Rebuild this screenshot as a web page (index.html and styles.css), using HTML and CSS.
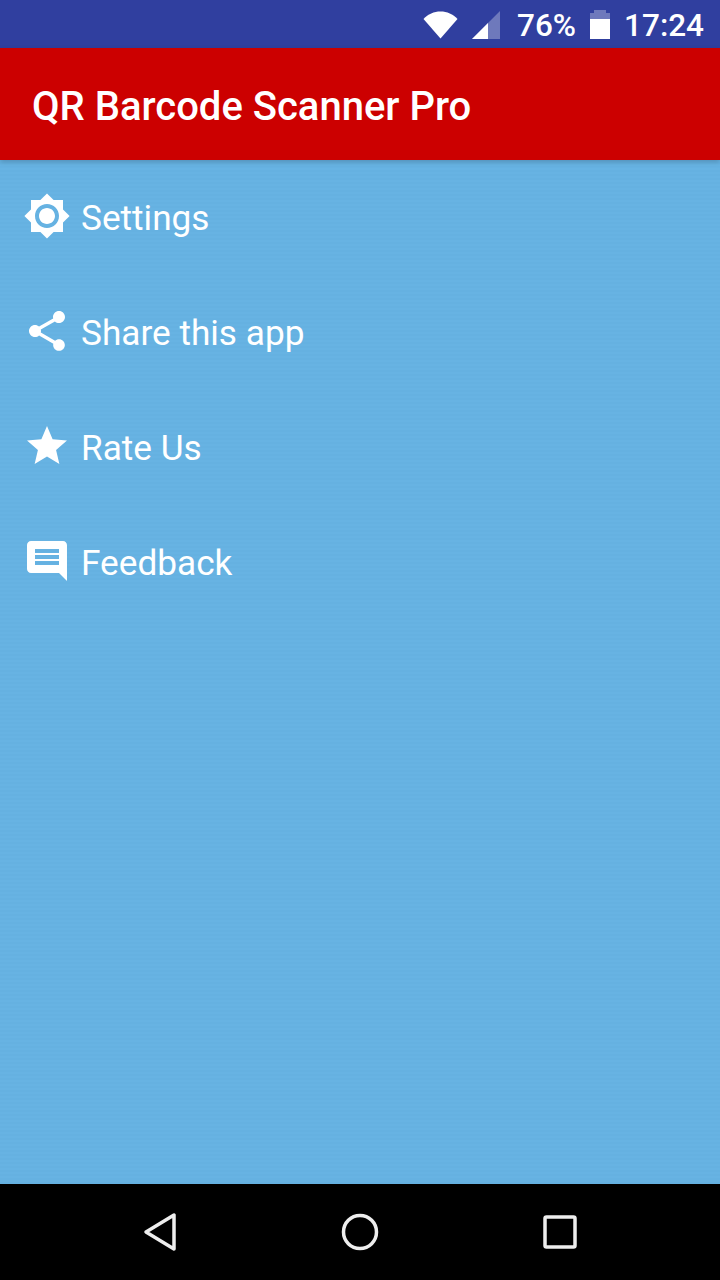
FILE: index.html
```html
<!DOCTYPE html>
<html lang="en">
<head>
    <meta charset="UTF-8">
    <title>QR Barcode Scanner Pro</title>
    <link rel="stylesheet" href="styles.css">
</head>
<body>
    <!-- status bar -->
    <div class="status-bar">
        <svg class="wifi-icon" width="36" height="28" viewBox="0 0 36 28"><path d="M17.500 27.500L.5 8C5 3 11 .5 17.500 .5s12.500 2.500 17 7.500z" fill="#fff"/></svg>
        <svg class="signal-icon" width="28" height="28" viewBox="0 0 28 28">
            <path d="M28 0v28H0z" fill="#fff" fill-opacity="0.3"/>
            <path d="M16 12v16H0z" fill="#fff"/>
        </svg>
        <span class="status-text percent">76%</span>
        <svg class="battery-icon" width="20" height="29" viewBox="0 0 20 29">
            <path d="M4 0h12v3h4v6H0V3h4z" fill="#fff" fill-opacity="0.3"/>
            <path d="M0 9h20v20H0z" fill="#fff"/>
        </svg>
        <span class="status-text time">17:24</span>
    </div>

    <!-- app bar -->
    <header class="app-bar">QR Barcode Scanner Pro</header>

    <!-- menu -->
    <main class="menu">
        <div class="menu-item">
            <svg class="menu-icon" viewBox="0 0 24 24"><path d="M20 8.690V4h-4.690L12 .69 8.690 4H4v4.690L.69 12 4 15.310V20h4.690L12 23.310 15.310 20H20v-4.690L23.310 12 20 8.690zM12 18c-3.310 0-6-2.690-6-6s2.690-6 6-6 6 2.690 6 6-2.690 6-6 6zm0-10c-2.210 0-4 1.790-4 4s1.790 4 4 4 4-1.790 4-4-1.790-4-4-4z"/></svg>
            <span>Settings</span>
        </div>
        <div class="menu-item">
            <svg class="menu-icon" viewBox="0 0 24 24"><path d="M18 16.080c-.76 0-1.440.3-1.960.77L8.910 12.700c.05-.23.09-.46.09-.7s-.04-.47-.09-.7l7.050-4.110c.54.5 1.250.81 2.040.81 1.660 0 3-1.340 3-3s-1.340-3-3-3-3 1.340-3 3c0 .24.04.47.09.7L8.040 9.810C7.500 9.310 6.790 9 6 9c-1.660 0-3 1.340-3 3s1.340 3 3 3c.79 0 1.500-.31 2.040-.81l7.120 4.160c-.05.21-.08.43-.08.65 0 1.610 1.310 2.920 2.920 2.920 1.610 0 2.920-1.310 2.920-2.920s-1.310-2.920-2.920-2.920z"/></svg>
            <span>Share this app</span>
        </div>
        <div class="menu-item">
            <svg class="menu-icon" viewBox="0 0 24 24"><path d="M12 17.270L18.180 21l-1.640-7.030L22 9.240l-7.190-.61L12 2 9.190 8.630 2 9.240l5.460 4.730L5.820 21z"/></svg>
            <span>Rate Us</span>
        </div>
        <div class="menu-item">
            <svg class="menu-icon" viewBox="0 0 24 24"><path fill-rule="evenodd" d="M4 2h16c1.100 0 1.990.9 1.990 2L22 22l-4-4H4c-1.100 0-2-.9-2-2V4c0-1.100.9-2 2-2zM6 6v2h12V6zm0 3v2h12V9zm0 3v2h12v-2z"/></svg>
            <span>Feedback</span>
        </div>
    </main>

    <!-- navigation bar -->
    <nav class="nav-bar">
        <svg class="nav-icon" viewBox="0 0 48 48"><path d="M38 7v34L10 24z"/></svg>
        <svg class="nav-icon" viewBox="0 0 48 48"><circle cx="24" cy="24" r="16.500"/></svg>
        <svg class="nav-icon" viewBox="0 0 48 48"><rect x="9" y="9" width="30" height="30" rx="1.500"/></svg>
    </nav>
</body>
</html>
```

FILE: styles.css
```css
* {
    box-sizing: border-box;
}

body {
    font-family: Roboto, "Noto Sans", sans-serif;
    background-color: #67b3e3;
    color: #fff;
    display: flex;
    flex-direction: column;
    width: 720px;
    height: 1280px;
    margin: 0;
    overflow: hidden;
}

.status-bar {
    height: 48px;
    background-color: #303f9f;
    display: flex;
    align-items: center;
    justify-content: flex-end;
    padding-right: 16px;
    flex-shrink: 0;
}

.status-text {
    font-size: 31.5px;
    font-weight: 500;
    padding-top: 2px;
}

.wifi-icon {
    margin-top: 1px;
    margin-right: 13px;
}

.signal-icon {
    margin-top: 1px;
    margin-right: 17px;
}

.battery-icon {
    margin-top: 1px;
    margin-left: 14px;
    margin-right: 14px;
}

.app-bar {
    height: 112px;
    background-color: #cc0000;
    font-size: 40px;
    font-weight: 500;
    display: flex;
    align-items: center;
    padding: 4px 0 0 32px;
    box-shadow: 0 2px 5px rgba(0, 0, 0, 0.2);
    flex-shrink: 0;
    position: relative;
}

/* faint horizontal banding in the background */
.menu {
    flex: 1;
    background: repeating-linear-gradient(to bottom, #67b3e3 0, #67b3e3 2px, #65b1e1 2px, #65b1e1 4px);
}

.menu-item {
    height: 115px;
    display: flex;
    align-items: center;
    gap: 10px;
    padding-left: 23px;
    font-size: 35.2px;
}

.menu-item span {
    padding-top: 1px;
}

.menu-icon {
    width: 48px;
    height: 48px;
    fill: #fff;
    margin-bottom: 3px;
}

.nav-bar {
    height: 96px;
    background-color: #000;
    display: flex;
    align-items: center;
    justify-content: center;
    flex-shrink: 0;
}

.nav-icon {
    width: 48px;
    height: 48px;
    margin: 0 76px;
    fill: none;
    stroke: #eee;
    stroke-width: 3.500;
    stroke-linejoin: round;
}
```
